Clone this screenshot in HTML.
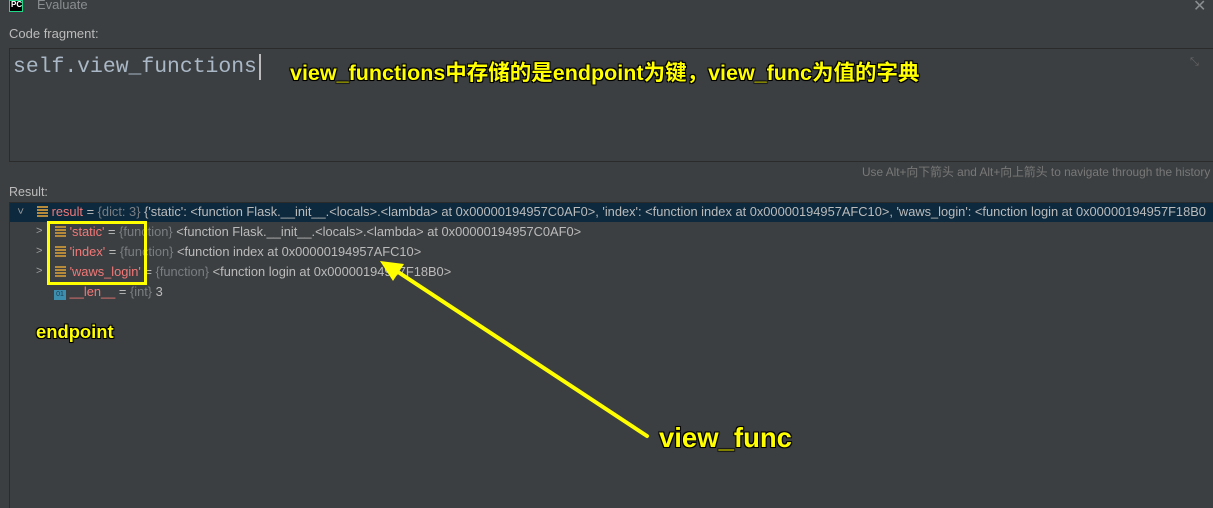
<!DOCTYPE html>
<html><head><meta charset="utf-8"><style>
*{margin:0;padding:0;box-sizing:border-box}
body{width:1213px;height:508px;background:#3c3f41;font-family:"Liberation Sans","Noto Sans CJK SC",sans-serif;color:#bbbbbb;position:relative;overflow:hidden;font-size:12px}
.a{position:absolute;white-space:nowrap}
.y{color:#ffff00;font-weight:bold;text-shadow:-1px -1px 0 #000,1px -1px 0 #000,-1px 1px 0 #000,1px 1px 0 #000,0 0 2px #000}
.k{color:#f07878}
.g{color:#7a7e82}
.ic{display:inline-block;width:11px;height:11px;background:repeating-linear-gradient(#b58a3a 0 2px,transparent 2px 3px);vertical-align:-1px}
.row{position:absolute;height:20px;line-height:20px;white-space:nowrap;font-size:12.85px}
.chev{position:absolute;color:#a0a0a0;font-size:11px}
</style></head><body>
<div class="a" style="left:9px;top:0;width:14px;height:12px;background:#000;border:1px solid #21d789;color:#fff;font-size:8px;font-weight:bold;line-height:7px;padding-left:1px">PC</div>
<div class="a" style="left:37px;top:-3px;font-size:13px;color:#8a8d90">Evaluate</div>
<div class="a" style="left:1193px;top:-4px;font-size:16px;color:#8a8d90">✕</div>
<div class="a" style="left:9px;top:26px;font-size:13px;color:#bbb">Code fragment:</div>
<div class="a" style="left:9px;top:48px;width:1205px;height:114px;border:1px solid #2b2b2b;background:#3c3f41"></div>
<div class="a" style="left:13px;top:55px;font-family:'Liberation Mono',monospace;font-size:21.4px;color:#a9b7c6">self.view_functions</div>
<div class="a" style="left:259px;top:54px;width:2px;height:26px;background:#bbb"></div>
<div class="a" style="left:1190px;top:56px;color:#666;font-size:11px">⤡</div>
<div class="a y" style="left:290px;top:56px;font-size:21.5px">view_functions中存储的是endpoint为键，view_func为值的字典</div>
<div class="a" style="left:862px;top:163px;font-size:11.85px;color:#787878">Use Alt+向下箭头 and Alt+向上箭头 to navigate through the history</div>
<div class="a" style="left:9px;top:185px;font-size:12.5px">Result:</div>
<div class="a" style="left:9px;top:202px;width:1205px;height:306px;border-left:1px solid #2b2b2b;border-top:1px solid #2b2b2b"></div>
<div class="a" style="left:10px;top:203px;width:1203px;height:19px;background:#0d293e"></div>
<div class="chev" style="left:17px;top:205px;transform:rotate(90deg)">&gt;</div>
<div class="row" style="left:37px;top:202px"><span class="ic"></span> <span class="k">result</span> = <span class="g">{dict: 3}</span> {'static': &lt;function Flask.__init__.&lt;locals&gt;.&lt;lambda&gt; at 0x00000194957C0AF0&gt;, 'index': &lt;function index at 0x00000194957AFC10&gt;, 'waws_login': &lt;function login at 0x00000194957F18B0</div>
<div class="chev" style="left:36px;top:225px">&gt;</div>
<div class="row" style="left:55px;top:222px"><span class="ic"></span> <span class="k">'static'</span> = <span class="g">{function}</span> &lt;function Flask.__init__.&lt;locals&gt;.&lt;lambda&gt; at 0x00000194957C0AF0&gt;</div>
<div class="chev" style="left:36px;top:245px">&gt;</div>
<div class="row" style="left:55px;top:242px"><span class="ic"></span> <span class="k">'index'</span> = <span class="g">{function}</span> &lt;function index at 0x00000194957AFC10&gt;</div>
<div class="chev" style="left:36px;top:265px">&gt;</div>
<div class="row" style="left:55px;top:262px"><span class="ic"></span> <span class="k">'waws_login'</span> = <span class="g">{function}</span> &lt;function login at 0x00000194957F18B0&gt;</div>
<div class="row" style="left:54px;top:282px"><span style="display:inline-block;width:12px;height:10px;background:#3d8fb0;color:#1c3a4a;font-size:7px;line-height:10px;text-align:center;vertical-align:0">01</span> <span class="k">__len__</span> = <span class="g">{int}</span> 3</div>
<div class="a" style="left:47px;top:221px;width:100px;height:64px;border:3px solid #ffff00"></div>
<div class="a y" style="left:36px;top:321px;font-size:18.4px">endpoint</div>
<div class="a y" style="left:659px;top:422px;font-size:27.5px">view_func</div>
<svg class="a" style="left:0;top:0" width="1213" height="508">
<line x1="647" y1="436" x2="392" y2="268" stroke="#ffff00" stroke-width="4" stroke-linecap="round"/>
<polygon points="380,261 404,264 393,281" fill="#ffff00"/>
</svg>
</body></html>
